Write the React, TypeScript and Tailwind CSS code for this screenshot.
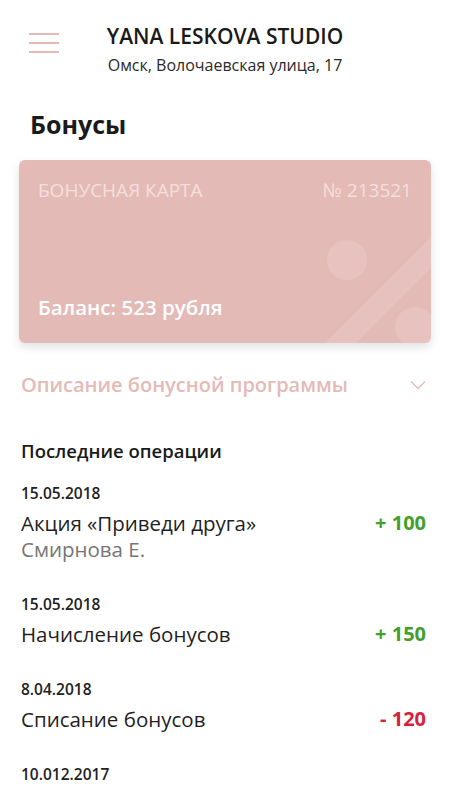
import React from "react";

const ops = [
  { date: "15.05.2018", title: "Акция «Приведи друга»", sub: "Смирнова Е.", amount: "+ 100", pos: true },
  { date: "15.05.2018", title: "Начисление бонусов", amount: "+ 150", pos: true },
  { date: "8.04.2018", title: "Списание бонусов", amount: "- 120", pos: false },
];

export default function App() {
  return (
    <div className="w-[450px] h-[800px] overflow-hidden bg-white text-[#1f1f1f]" style={{ fontFamily: "'Open Sans', 'Noto Sans', sans-serif" }}>
      <header className="grid grid-cols-[1fr_auto_1fr] items-start pt-[24px]">
        <div className="pl-[29px] pt-[9px] flex flex-col gap-[7px]">
          <div className="w-[30px] h-[2px] bg-[#e4bab7]" />
          <div className="w-[30px] h-[2px] bg-[#e4bab7]" />
          <div className="w-[30px] h-[2px] bg-[#e4bab7]" />
        </div>
        <div className="flex flex-col items-center">
          <div className="text-[21px] font-semibold leading-[24px] text-[#1a1a1a]">YANA LESKOVA STUDIO</div>
          <div className="text-[16px] leading-[20px] mt-[7px] text-[#2a2a2a]">Омск, Волочаевская улица, 17</div>
        </div>
        <div />
      </header>

      <h1 className="text-[25px] font-bold leading-[30px] mt-[34px] pl-[30px] text-[#1a1a1a]">Бонусы</h1>

      <div className="mx-[19px] mt-[21px] h-[183px] rounded-[6px] bg-[#e4bab7] relative overflow-hidden shadow-[0_4px_10px_rgba(0,0,0,0.12)] flex flex-col justify-between px-[19px] pt-[18px] pb-[24px]">
        <svg className="absolute inset-0" width="412" height="183" viewBox="0 0 412 183">
          <circle cx="328" cy="100" r="20" fill="#ffffff" fillOpacity="0.12" />
          <polygon points="306,183 412,77 412,108 337,183" fill="#ffffff" fillOpacity="0.1" />
          <circle cx="396" cy="167" r="20" fill="#ffffff" fillOpacity="0.12" />
        </svg>
        <div className="relative flex justify-between text-[19px] leading-[24px] text-[#f5dfdd]">
          <span>БОНУСНАЯ КАРТА</span>
          <span>№ 213521</span>
        </div>
        <div className="relative text-[20.5px] font-semibold leading-[24px] text-white">Баланс: 523 рубля</div>
      </div>

      <div className="flex items-center justify-between pl-[21px] pr-[24px] mt-[30px]">
        <span className="text-[20px] font-semibold leading-[24px] text-[#e4bab7]">Описание бонусной программы</span>
        <svg width="16" height="10" viewBox="0 0 16 10">
          <polyline points="1,1.5 8,8.5 15,1.5" fill="none" stroke="#e4bab7" strokeWidth="1.3" />
        </svg>
      </div>

      <div className="px-[21px] mt-[42px]">
        <div className="text-[18.5px] font-semibold leading-[24px] text-[#1a1a1a]">Последние операции</div>
        <div className="flex flex-col gap-[32px] mt-[20px]">
          {ops.map((o, i) => (
            <div key={i}>
              <div className="text-[15.5px] font-semibold leading-[20px] text-[#222222]">{o.date}</div>
              <div className="flex justify-between items-center mt-[7px] pr-[3px]">
                <span className="text-[20.5px] leading-[26px] text-[#1f1f1f]">{o.title}</span>
                <span className={"text-[20px] font-bold leading-[26px] " + (o.pos ? "text-[#43a02c]" : "text-[#d8213a]")}>{o.amount}</span>
              </div>
              {o.sub && <div className="text-[20.5px] leading-[26px] text-[#767676]">{o.sub}</div>}
            </div>
          ))}
          <div className="text-[15.5px] font-semibold leading-[20px] text-[#222222]">10.012.2017</div>
        </div>
      </div>
    </div>
  );
}
